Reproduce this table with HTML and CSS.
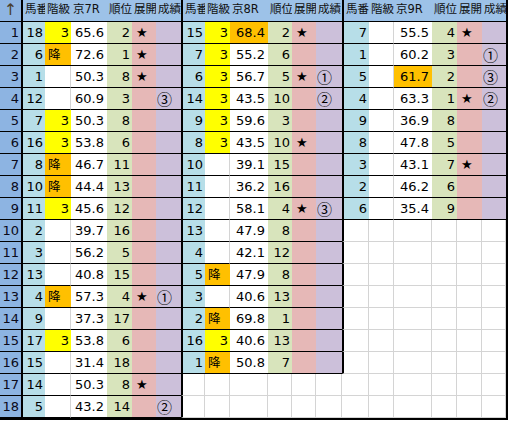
FILE: index.html
```html
<!DOCTYPE html>
<html lang="ja">
<head>
<meta charset="utf-8">
<title>京 7R-9R</title>
<link rel="stylesheet" href="styles.css">
</head>
<body>
<div class="sheet">
  <div class="c h hi">↑</div>
  <div class="c h g">馬番</div><div class="c h">階級</div><div class="c h">京7R</div><div class="c h">順位</div><div class="c h">展開</div><div class="c h">成績</div>
  <div class="c h g">馬番</div><div class="c h">階級</div><div class="c h">京8R</div><div class="c h">順位</div><div class="c h">展開</div><div class="c h">成績</div>
  <div class="c h g">馬番</div><div class="c h">階級</div><div class="c h">京9R</div><div class="c h">順位</div><div class="c h">展開</div><div class="c h">成績</div>

  <div class="c i">1</div>
  <div class="c n">18</div><div class="c k y">3</div><div class="c v">65.6</div><div class="c r">2</div><div class="c t">★</div><div class="c s"></div>
  <div class="c n">15</div><div class="c k y">3</div><div class="c v hl">68.4</div><div class="c r">2</div><div class="c t">★</div><div class="c s"></div>
  <div class="c n">7</div><div class="c k"></div><div class="c v">55.5</div><div class="c r">4</div><div class="c t">★</div><div class="c s"></div>

  <div class="c i">2</div>
  <div class="c n">6</div><div class="c k o">降</div><div class="c v">72.6</div><div class="c r">1</div><div class="c t">★</div><div class="c s"></div>
  <div class="c n">7</div><div class="c k y">3</div><div class="c v">55.2</div><div class="c r">6</div><div class="c t"></div><div class="c s"></div>
  <div class="c n">1</div><div class="c k"></div><div class="c v">60.2</div><div class="c r">3</div><div class="c t"></div><div class="c s">①</div>

  <div class="c i">3</div>
  <div class="c n">1</div><div class="c k"></div><div class="c v">50.3</div><div class="c r">8</div><div class="c t">★</div><div class="c s"></div>
  <div class="c n">6</div><div class="c k y">3</div><div class="c v">56.7</div><div class="c r">5</div><div class="c t">★</div><div class="c s">①</div>
  <div class="c n">5</div><div class="c k"></div><div class="c v hl">61.7</div><div class="c r">2</div><div class="c t"></div><div class="c s">③</div>

  <div class="c i">4</div>
  <div class="c n">12</div><div class="c k"></div><div class="c v">60.9</div><div class="c r">3</div><div class="c t"></div><div class="c s">③</div>
  <div class="c n">14</div><div class="c k y">3</div><div class="c v">43.5</div><div class="c r">10</div><div class="c t"></div><div class="c s">②</div>
  <div class="c n">4</div><div class="c k"></div><div class="c v">63.3</div><div class="c r">1</div><div class="c t">★</div><div class="c s">②</div>

  <div class="c i">5</div>
  <div class="c n">7</div><div class="c k y">3</div><div class="c v">50.3</div><div class="c r">8</div><div class="c t"></div><div class="c s"></div>
  <div class="c n">9</div><div class="c k y">3</div><div class="c v">59.6</div><div class="c r">3</div><div class="c t"></div><div class="c s"></div>
  <div class="c n">9</div><div class="c k"></div><div class="c v">36.9</div><div class="c r">8</div><div class="c t"></div><div class="c s"></div>

  <div class="c i">6</div>
  <div class="c n">16</div><div class="c k y">3</div><div class="c v">53.8</div><div class="c r">6</div><div class="c t"></div><div class="c s"></div>
  <div class="c n">8</div><div class="c k y">3</div><div class="c v">43.5</div><div class="c r">10</div><div class="c t">★</div><div class="c s"></div>
  <div class="c n">8</div><div class="c k"></div><div class="c v">47.8</div><div class="c r">5</div><div class="c t"></div><div class="c s"></div>

  <div class="c i">7</div>
  <div class="c n">8</div><div class="c k o">降</div><div class="c v">46.7</div><div class="c r">11</div><div class="c t"></div><div class="c s"></div>
  <div class="c n">10</div><div class="c k"></div><div class="c v">39.1</div><div class="c r">15</div><div class="c t"></div><div class="c s"></div>
  <div class="c n">3</div><div class="c k"></div><div class="c v">43.1</div><div class="c r">7</div><div class="c t">★</div><div class="c s"></div>

  <div class="c i">8</div>
  <div class="c n">10</div><div class="c k o">降</div><div class="c v">44.4</div><div class="c r">13</div><div class="c t"></div><div class="c s"></div>
  <div class="c n">11</div><div class="c k"></div><div class="c v">36.2</div><div class="c r">16</div><div class="c t"></div><div class="c s"></div>
  <div class="c n">2</div><div class="c k"></div><div class="c v">46.2</div><div class="c r">6</div><div class="c t"></div><div class="c s"></div>

  <div class="c i">9</div>
  <div class="c n">11</div><div class="c k y">3</div><div class="c v">45.6</div><div class="c r">12</div><div class="c t"></div><div class="c s"></div>
  <div class="c n">12</div><div class="c k"></div><div class="c v">58.1</div><div class="c r">4</div><div class="c t">★</div><div class="c s">③</div>
  <div class="c n">6</div><div class="c k"></div><div class="c v">35.4</div><div class="c r">9</div><div class="c t"></div><div class="c s"></div>

  <div class="c i">10</div>
  <div class="c n">2</div><div class="c k"></div><div class="c v">39.7</div><div class="c r">16</div><div class="c t"></div><div class="c s"></div>
  <div class="c n">13</div><div class="c k"></div><div class="c v">47.9</div><div class="c r">8</div><div class="c t"></div><div class="c s"></div>
  <div class="c e g"></div><div class="c e"></div><div class="c e"></div><div class="c e"></div><div class="c e"></div><div class="c e"></div>

  <div class="c i">11</div>
  <div class="c n">3</div><div class="c k"></div><div class="c v">56.2</div><div class="c r">5</div><div class="c t"></div><div class="c s"></div>
  <div class="c n">4</div><div class="c k"></div><div class="c v">42.1</div><div class="c r">12</div><div class="c t"></div><div class="c s"></div>
  <div class="c e g"></div><div class="c e"></div><div class="c e"></div><div class="c e"></div><div class="c e"></div><div class="c e"></div>

  <div class="c i">12</div>
  <div class="c n">13</div><div class="c k"></div><div class="c v">40.8</div><div class="c r">15</div><div class="c t"></div><div class="c s"></div>
  <div class="c n">5</div><div class="c k o">降</div><div class="c v">47.9</div><div class="c r">8</div><div class="c t"></div><div class="c s"></div>
  <div class="c e g"></div><div class="c e"></div><div class="c e"></div><div class="c e"></div><div class="c e"></div><div class="c e"></div>

  <div class="c i">13</div>
  <div class="c n">4</div><div class="c k o">降</div><div class="c v">57.3</div><div class="c r">4</div><div class="c t">★</div><div class="c s">①</div>
  <div class="c n">3</div><div class="c k"></div><div class="c v">40.6</div><div class="c r">13</div><div class="c t"></div><div class="c s"></div>
  <div class="c e g"></div><div class="c e"></div><div class="c e"></div><div class="c e"></div><div class="c e"></div><div class="c e"></div>

  <div class="c i">14</div>
  <div class="c n">9</div><div class="c k"></div><div class="c v">37.3</div><div class="c r">17</div><div class="c t"></div><div class="c s"></div>
  <div class="c n">2</div><div class="c k o">降</div><div class="c v">69.8</div><div class="c r">1</div><div class="c t"></div><div class="c s"></div>
  <div class="c e g"></div><div class="c e"></div><div class="c e"></div><div class="c e"></div><div class="c e"></div><div class="c e"></div>

  <div class="c i">15</div>
  <div class="c n">17</div><div class="c k y">3</div><div class="c v">53.8</div><div class="c r">6</div><div class="c t"></div><div class="c s"></div>
  <div class="c n">16</div><div class="c k y">3</div><div class="c v">40.6</div><div class="c r">13</div><div class="c t"></div><div class="c s"></div>
  <div class="c e g"></div><div class="c e"></div><div class="c e"></div><div class="c e"></div><div class="c e"></div><div class="c e"></div>

  <div class="c i">16</div>
  <div class="c n">15</div><div class="c k"></div><div class="c v">31.4</div><div class="c r">18</div><div class="c t"></div><div class="c s"></div>
  <div class="c n">1</div><div class="c k o">降</div><div class="c v">50.8</div><div class="c r">7</div><div class="c t"></div><div class="c s"></div>
  <div class="c e g"></div><div class="c e"></div><div class="c e"></div><div class="c e"></div><div class="c e"></div><div class="c e"></div>

  <div class="c i">17</div>
  <div class="c n">14</div><div class="c k"></div><div class="c v">50.3</div><div class="c r">8</div><div class="c t">★</div><div class="c s"></div>
  <div class="c e g"></div><div class="c e"></div><div class="c e"></div><div class="c e"></div><div class="c e"></div><div class="c e"></div>
  <div class="c e"></div><div class="c e"></div><div class="c e"></div><div class="c e"></div><div class="c e"></div><div class="c e"></div>

  <div class="c i">18</div>
  <div class="c n">5</div><div class="c k"></div><div class="c v">43.2</div><div class="c r">14</div><div class="c t"></div><div class="c s">②</div>
  <div class="c e g"></div><div class="c e"></div><div class="c e"></div><div class="c e"></div><div class="c e"></div><div class="c e"></div>
  <div class="c e"></div><div class="c e"></div><div class="c e"></div><div class="c e"></div><div class="c e"></div><div class="c e"></div>
</div>
</body>
</html>
```

FILE: styles.css
```css
html, body {
  margin: 0;
  padding: 0;
  background: #ffffff;
}

.sheet {
  display: grid;
  grid-template-columns:
    21px
    24px 26px 36px 25px 24px 25px
    24px 25px 38px 24px 24px 26px
    27px 25px 38px 25px 25px 24px;
  grid-auto-rows: 22px;
  width: 506px;
  border-right: 2px solid #000;
  border-bottom: 2px solid #000;
  font-family: "DejaVu Sans", "Noto Sans CJK JP", sans-serif;
  font-size: 13px;
  color: #000;
}

.c {
  box-sizing: border-box;
  display: flex;
  align-items: center;
  justify-content: flex-end;
  padding: 0 2px 1px 2px;
  border-bottom: 1px solid #000;
  white-space: nowrap;
  background: #fff;
  line-height: 1;
}

.h {
  background: #9dc2e8;
  justify-content: flex-start;
  padding-left: 2px;
  font-size: 11.5px;
  color: #111;
}

.hi {
  justify-content: center;
  color: #4a4030;
  background: #8eb4e2;
  font-size: 16px;
}

.g {
  border-left: 2px solid #000;
}

.i {
  background: #8db4e2;
  color: #0a0a1a;
}

.n {
  background: #b7dee8;
  border-left: 2px solid #000;
}

.k {
  border-right: 1px solid #d4d4d4;
}

.y {
  background: #ffff00;
  border-right: none;
}

.o {
  background: #ffc000;
  border-right: none;
  justify-content: flex-start;
  padding-left: 3px;
  font-family: "Noto Sans CJK JP", sans-serif;
  font-size: 12.5px;
}

.v {
  padding-right: 3px;
}

.hl {
  background: #ffc000;
}

.r {
  background: #d8e4bc;
}

.t {
  background: #e6b8b7;
  justify-content: flex-start;
  padding-left: 4px;
}

.s {
  background: #ccc0da;
  justify-content: flex-start;
  padding-left: 1px;
  font-family: "Noto Sans CJK JP", sans-serif;
  font-size: 15px;
}

.e {
  background: #fff;
  border-right: 1px solid #d4d4d4;
  border-bottom: 1px solid #d4d4d4;
}
```
